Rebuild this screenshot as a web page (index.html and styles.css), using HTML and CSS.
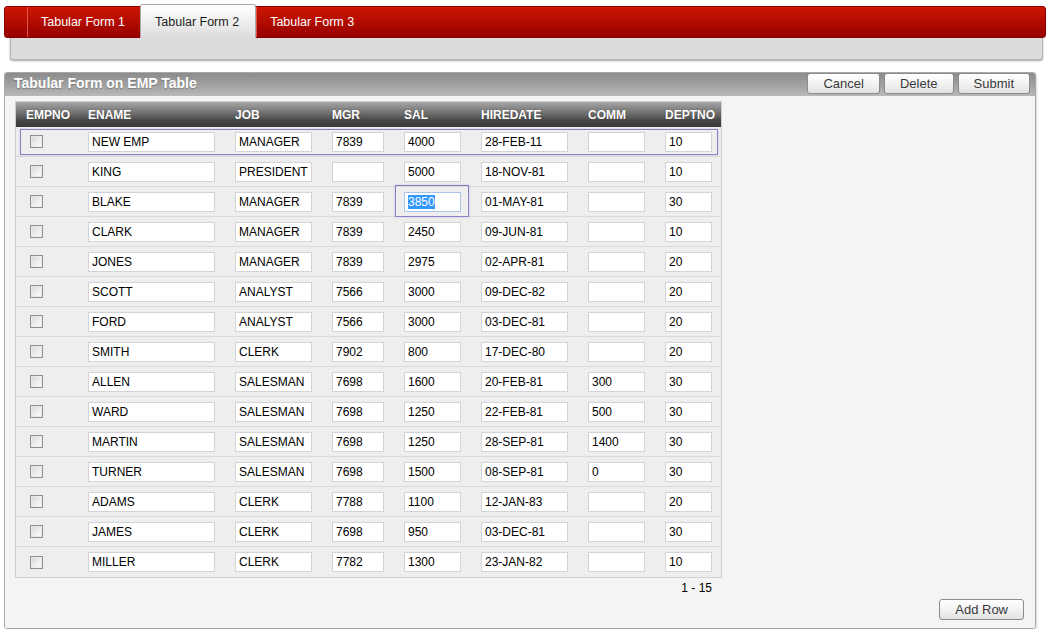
FILE: index.html
```html
<!DOCTYPE html>
<html>
<head>
<meta charset="utf-8">
<title>Tabular Form</title>
<link rel="stylesheet" href="styles.css">
</head>
<body>
<nav class="tabbar">
  <div class="tab-stub"></div>
  <div class="tab">Tabular Form 1</div>
  <div class="tab active">Tabular Form 2</div>
  <div class="tab">Tabular Form 3</div>
</nav>
<div class="subbar"></div>

<section class="region">
  <header class="region-head">
    <h2 class="region-title">Tabular Form on EMP Table</h2>
    <div class="btns">
      <button class="btn">Cancel</button>
      <button class="btn">Delete</button>
      <button class="btn">Submit</button>
    </div>
  </header>
  <div class="region-body">
    <div class="tform">
      <div class="row head">
        <div>EMPNO</div><div>ENAME</div><div>JOB</div><div>MGR</div><div>SAL</div><div>HIREDATE</div><div>COMM</div><div>DEPTNO</div>
      </div>
      <div class="row new">
        <span class="cb"></span><div class="field">NEW EMP</div><div class="field">MANAGER</div><div class="field">7839</div><div class="field">4000</div><div class="field">28-FEB-11</div><div class="field"></div><div class="field">10</div>
      </div>
      <div class="row">
        <span class="cb"></span><div class="field">KING</div><div class="field">PRESIDENT</div><div class="field"></div><div class="field">5000</div><div class="field">18-NOV-81</div><div class="field"></div><div class="field">10</div>
      </div>
      <div class="row">
        <span class="cb"></span><div class="field">BLAKE</div><div class="field">MANAGER</div><div class="field">7839</div><div class="field focus"><span class="sel">3850</span></div><div class="field">01-MAY-81</div><div class="field"></div><div class="field">30</div>
      </div>
      <div class="row">
        <span class="cb"></span><div class="field">CLARK</div><div class="field">MANAGER</div><div class="field">7839</div><div class="field">2450</div><div class="field">09-JUN-81</div><div class="field"></div><div class="field">10</div>
      </div>
      <div class="row">
        <span class="cb"></span><div class="field">JONES</div><div class="field">MANAGER</div><div class="field">7839</div><div class="field">2975</div><div class="field">02-APR-81</div><div class="field"></div><div class="field">20</div>
      </div>
      <div class="row">
        <span class="cb"></span><div class="field">SCOTT</div><div class="field">ANALYST</div><div class="field">7566</div><div class="field">3000</div><div class="field">09-DEC-82</div><div class="field"></div><div class="field">20</div>
      </div>
      <div class="row">
        <span class="cb"></span><div class="field">FORD</div><div class="field">ANALYST</div><div class="field">7566</div><div class="field">3000</div><div class="field">03-DEC-81</div><div class="field"></div><div class="field">20</div>
      </div>
      <div class="row">
        <span class="cb"></span><div class="field">SMITH</div><div class="field">CLERK</div><div class="field">7902</div><div class="field">800</div><div class="field">17-DEC-80</div><div class="field"></div><div class="field">20</div>
      </div>
      <div class="row">
        <span class="cb"></span><div class="field">ALLEN</div><div class="field">SALESMAN</div><div class="field">7698</div><div class="field">1600</div><div class="field">20-FEB-81</div><div class="field">300</div><div class="field">30</div>
      </div>
      <div class="row">
        <span class="cb"></span><div class="field">WARD</div><div class="field">SALESMAN</div><div class="field">7698</div><div class="field">1250</div><div class="field">22-FEB-81</div><div class="field">500</div><div class="field">30</div>
      </div>
      <div class="row">
        <span class="cb"></span><div class="field">MARTIN</div><div class="field">SALESMAN</div><div class="field">7698</div><div class="field">1250</div><div class="field">28-SEP-81</div><div class="field">1400</div><div class="field">30</div>
      </div>
      <div class="row">
        <span class="cb"></span><div class="field">TURNER</div><div class="field">SALESMAN</div><div class="field">7698</div><div class="field">1500</div><div class="field">08-SEP-81</div><div class="field">0</div><div class="field">30</div>
      </div>
      <div class="row">
        <span class="cb"></span><div class="field">ADAMS</div><div class="field">CLERK</div><div class="field">7788</div><div class="field">1100</div><div class="field">12-JAN-83</div><div class="field"></div><div class="field">20</div>
      </div>
      <div class="row">
        <span class="cb"></span><div class="field">JAMES</div><div class="field">CLERK</div><div class="field">7698</div><div class="field">950</div><div class="field">03-DEC-81</div><div class="field"></div><div class="field">30</div>
      </div>
      <div class="row last">
        <span class="cb"></span><div class="field">MILLER</div><div class="field">CLERK</div><div class="field">7782</div><div class="field">1300</div><div class="field">23-JAN-82</div><div class="field"></div><div class="field">10</div>
      </div>
    </div>
    <div class="pager">1 - 15</div>
    <div class="actions"><button class="btn">Add Row</button></div>
  </div>
</section>
</body>
</html>
```

FILE: styles.css
```css
* { box-sizing: border-box; }

body {
  margin: 0;
  background: #ffffff;
  font-family: "Liberation Sans", Arial, sans-serif;
  color: #000;
}

/* ---------- tabs ---------- */
.tabbar {
  display: flex;
  height: 32px;
  margin: 6px 5px 0 4px;
  border: 1px solid #8a0000;
  border-radius: 3px;
  background: linear-gradient(#cd1602, #b00a00 55%, #960000);
}
.tab-stub {
  width: 22px;
}
.tab {
  display: flex;
  align-items: center;
  padding: 0 15px 0 13px;
  border-left: 1px solid #e0564a;
  color: #ffffff;
  font-size: 12.5px;
}
.tab.active {
  margin-top: -3px;
  margin-bottom: -1px;
  padding: 0 16px 0 14px;
  border: 1px solid #a8a8a8;
  border-bottom: none;
  border-radius: 3px 3px 0 0;
  background: linear-gradient(#ffffff, #f2f2f2 40%, #dcdcdc);
  color: #1e1e1e;
}

.subbar {
  height: 22px;
  margin: 0 8px 0 10px;
  background: #dcdcdc;
  border: 1px solid #b4b4b4;
  border-top: none;
  border-radius: 0 0 3px 3px;
  box-shadow: 0 1px 2px rgba(0, 0, 0, 0.35);
}

/* ---------- region ---------- */
.region {
  margin: 12px 15px 0 4px;
  border: 1px solid #a8a8a8;
  border-radius: 3px;
  box-shadow: 1px 1px 2px rgba(0, 0, 0, 0.15);
  overflow: hidden;
}
.region-head {
  display: flex;
  justify-content: space-between;
  align-items: flex-start;
  height: 23px;
  padding-left: 9px;
  background: linear-gradient(#8c8c8c, #a4a4a4 60%, #b9b9b9);
}
.region-title {
  margin: 0;
  font-size: 14px;
  line-height: 21px;
  font-weight: bold;
  color: #ffffff;
  text-shadow: 0 1px 1px rgba(0, 0, 0, 0.25);
}
.btns {
  display: flex;
  gap: 4px;
  margin-right: 5px;
}
.btn {
  height: 21px;
  padding: 0 15px;
  font-family: "Liberation Sans", Arial, sans-serif;
  font-size: 13px;
  line-height: 19px;
  color: #3a3a3a;
  border: 1px solid #8c8c8c;
  border-radius: 3px;
  background: linear-gradient(#ffffff, #f3f3f3 50%, #e1e1e1);
}

.region-body {
  padding: 5px 10px 8px 10px;
  background: #f4f4f4;
}

/* ---------- tabular form ---------- */
.tform {
  width: 707px;
  border: 1px solid #cfcfcf;
  background: #eeeeee;
}
.row {
  position: relative;
  display: grid;
  grid-template-columns: 42px 127px 77px 52px 57px 87px 57px 47px;
  column-gap: 20px;
  align-items: center;
  height: 30px;
  padding: 0 9px 0 10px;
  border-bottom: 1px solid #d9d9d9;
}
.row.last { border-bottom: none; }
.row.head {
  height: 25px;
  border-bottom: none;
  background: linear-gradient(#a6a6a6, #6e6e6e 45%, #454545 75%, #3a3a3a);
  color: #ffffff;
  font-size: 12px;
  font-weight: bold;
  text-shadow: 0 0 1px rgba(0, 0, 0, 0.4);
}
.row.new::after {
  content: "";
  position: absolute;
  top: 2px;
  bottom: 1px;
  left: 4px;
  right: 3px;
  border: 1px solid #8383c6;
  box-shadow: 0 0 2px rgba(120, 120, 190, 0.35);
  pointer-events: none;
}

.cb {
  width: 13px;
  height: 13px;
  margin-left: 4px;
  border: 1px solid #8e8f8f;
  background: linear-gradient(135deg, #d6d6d6, #f0f0f0 60%, #fbfbfb);
  box-shadow: inset 0 0 0 1px #eaeaea;
}

.field {
  position: relative;
  height: 20px;
  padding: 0 3px;
  border: 1px solid #d4d4d6;
  background: #ffffff;
  font-size: 12px;
  line-height: 18px;
  color: #000;
  white-space: nowrap;
}
.field.focus { border-color: #a9c6e8; }
.field.focus::after {
  content: "";
  position: absolute;
  top: -8px;
  bottom: -6px;
  left: -10px;
  right: -9px;
  border: 1px solid #8383c6;
  box-shadow: 0 0 2px rgba(120, 120, 190, 0.35);
  pointer-events: none;
}
.sel {
  background: #3399ff;
  color: #ffffff;
}

.pager {
  width: 707px;
  padding: 3px 10px 0 0;
  text-align: right;
  font-size: 12px;
  line-height: 14px;
}
.actions {
  display: flex;
  justify-content: flex-end;
  margin-top: 4px;
  padding-right: 1px;
}
```
